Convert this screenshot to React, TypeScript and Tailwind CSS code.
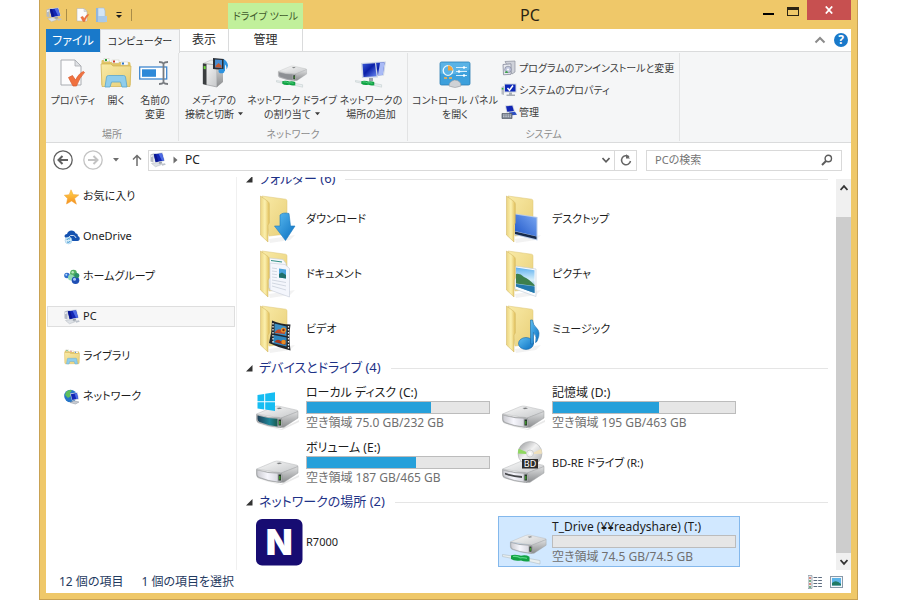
import type { ReactNode } from 'react';

interface Entry {
  name: string;
  icon: ReactNode;
  used?: number;
  free?: string;
  selected?: boolean;
}

interface Group {
  title: string;
  entries: Entry[];
}

// Shared gradients for every icon on the page
function IconDefs() {
  return (
    <svg className="absolute h-0 w-0" aria-hidden="true">
      <defs>
        <linearGradient id="folderBack" x1="0" y1="0" x2="1" y2="1">
          <stop offset="0" stopColor="#f9eaa6" />
          <stop offset="1" stopColor="#e8cf78" />
        </linearGradient>
        <linearGradient id="folderFlap" x1="0" y1="0" x2="1" y2="0">
          <stop offset="0" stopColor="#ecd47f" />
          <stop offset="0.5" stopColor="#fbf0ae" />
          <stop offset="1" stopColor="#e2c05c" />
        </linearGradient>
        <linearGradient id="arrowBlue" x1="0" y1="0" x2="1" y2="1">
          <stop offset="0" stopColor="#5dbdf2" />
          <stop offset="1" stopColor="#0a6fc0" />
        </linearGradient>
        <linearGradient id="screenBlue" x1="0" y1="0" x2="1" y2="1">
          <stop offset="0" stopColor="#3b5bd8" />
          <stop offset="0.45" stopColor="#0a1fa8" />
          <stop offset="1" stopColor="#6b8af2" />
        </linearGradient>
        <linearGradient id="deskBlue" x1="0" y1="1" x2="1" y2="0">
          <stop offset="0" stopColor="#1f57c8" />
          <stop offset="1" stopColor="#7aa7f2" />
        </linearGradient>
        <linearGradient id="steelTop" x1="0" y1="0" x2="1" y2="1">
          <stop offset="0" stopColor="#fafafa" />
          <stop offset="1" stopColor="#c6c8ca" />
        </linearGradient>
        <linearGradient id="steelSide" x1="0" y1="0" x2="0" y2="1">
          <stop offset="0" stopColor="#dedfe0" />
          <stop offset="1" stopColor="#8b8d8f" />
        </linearGradient>
        <linearGradient id="steelFront" x1="0" y1="0" x2="1" y2="0">
          <stop offset="0" stopColor="#cdcdd3" />
          <stop offset="0.5" stopColor="#f6f6fc" />
          <stop offset="1" stopColor="#dadae2" />
        </linearGradient>
        <linearGradient id="tealFront" x1="0" y1="0" x2="1" y2="0">
          <stop offset="0" stopColor="#1f4058" />
          <stop offset="0.6" stopColor="#1f8699" />
          <stop offset="1" stopColor="#1b5a4e" />
        </linearGradient>
        <linearGradient id="discSilver" x1="0" y1="0" x2="1" y2="1">
          <stop offset="0" stopColor="#8f9193" />
          <stop offset="0.45" stopColor="#f2f2f2" />
          <stop offset="1" stopColor="#a3a5a7" />
        </linearGradient>
        <linearGradient id="sky" x1="0" y1="0" x2="0" y2="1">
          <stop offset="0" stopColor="#5fb0ee" />
          <stop offset="0.5" stopColor="#d8f0fb" />
          <stop offset="1" stopColor="#2e86b8" />
        </linearGradient>
        <linearGradient id="star" x1="0" y1="0" x2="0" y2="1">
          <stop offset="0" stopColor="#ffd84f" />
          <stop offset="1" stopColor="#f58d1e" />
        </linearGradient>
      </defs>
    </svg>
  );
}

function PcIcon() {
  return (
    <svg className="h-4 w-4 shrink-0" viewBox="0 0 16 16">
      <path d="M.5 2.500L3.500 1.500v9L.5 9.500z" fill="#b4bac4" />
      <path d="M1 3.500l1.800-.5v1.600L1 5z" fill="#f3f5f8" />
      <path d="M3 1.500L12.500.6 14.800 9 5 10.800z" fill="#c3ccdc" />
      <path d="M3.800 2.200L12 1.400l2 7-8.300 1.500z" fill="#1226b4" />
      <path d="M8.500 1.800L12 1.400l2 7-2 .4z" fill="#4d6be6" />
      <path d="M3.800 2.200l2.200-.2 2.500 7.400-2.800.5z" fill="#0a1690" />
      <path d="M8.500 10.200l3-.6 1 1.900-3.200.6z" fill="#9aa1ab" />
      <path d="M1.500 11.500L7 10.500l4 2.300-5.500 2z" fill="#dde1e6" stroke="#a2a8b1" strokeWidth=".4" />
      <path d="M11 12l4-.8.700 1.500-3.500 1z" fill="#bcc2cb" />
    </svg>
  );
}

function FolderIcon({ children }: { children?: ReactNode }) {
  return (
    <svg className="h-12 w-12 shrink-0" viewBox="0 0 48 48">
      <path d="M13 44l26-4-5 5-20 3z" fill="#ececec" opacity=".7" />
      <path d="M6 1l23.500 3.200q1.500.3 1.500 1.800V39L13 41z" fill="url(#folderBack)" stroke="#dcc474" strokeWidth=".5" />
      {children}
      <path d="M4.500 1L12 6.500q1.300 1 1.300 2.500v19l-1.300 2v17L4.500 40z" fill="url(#folderFlap)" stroke="#cfb25c" strokeWidth=".5" />
    </svg>
  );
}

function DownloadFolder() {
  return (
    <FolderIcon>
      <path d="M24 20q3-3 9-1.500l1.500 12.500H39L29.500 45.500 18.500 31H24z" fill="url(#arrowBlue)" stroke="#1a78bf" strokeWidth=".6" />
    </FolderIcon>
  );
}

function DesktopFolder() {
  return (
    <FolderIcon>
      <path d="M13 18.500l22.500 3.500v23.500L13 40z" fill="#b8cbe8" />
      <path d="M13 19.500l21.500 3.300v18.400L13 36z" fill="url(#deskBlue)" />
      <path d="M13 36.500l21.500 5v2.800L13 39z" fill="#172a4b" />
    </FolderIcon>
  );
}

function DocumentFolder() {
  return (
    <FolderIcon>
      <path d="M13 8l14 1.500 3 4v28L13 38z" fill="#f7f9fd" stroke="#c5cbd8" strokeWidth=".6" />
      <path d="M15 10.500l11 1.500" stroke="#2f8f86" strokeWidth="1.200" />
      <path d="M14 13l15 1.500 4.500 4V47L14 40z" fill="#f4f6fc" stroke="#c5cbd8" strokeWidth=".6" />
      <path d="M23 18.500l7 1v9l-7-1z" fill="#4aa3dc" />
      <path d="M23 24l3-1.500 4 2.500v3.500l-7-1z" fill="#1f6f6a" />
      <path d="M16 18l5 .7M16 21l5 .7M16 24l5 .7M16 27l5 .7M16 30l14 2.500M16 33l14 3M16 36l14 4" stroke="#c9cfdb" strokeWidth=".8" />
    </FolderIcon>
  );
}

function PictureFolder() {
  return (
    <FolderIcon>
      <path d="M13 16l21 3v27.500L13 39z" fill="#fafcfe" stroke="#bfcbd6" strokeWidth=".6" />
      <path d="M14 17.500l18.500 2.800V43L14 36.500z" fill="url(#sky)" />
      <path d="M14 24q4-1 8 3 5 2 10.500 8v1L14 33.500z" fill="#3d7f4c" />
      <path d="M14 34l18.500 2.500V43L14 36.500z" fill="#2379ae" />
    </FolderIcon>
  );
}

function VideoFolder() {
  return (
    <FolderIcon>
      <path d="M16 15.500q9 4 18.500 4-2 12 0 26Q23 43 13 38q3-11 3-22.500z" fill="#23262b" />
      <path d="M18.500 18.500l12 3v9.500l-12-2.500z" fill="#3c8fc4" />
      <path d="M18 30l12.500 2.500v9L16.500 38z" fill="#2f86bd" />
      <path d="M19 27q3-4 6-2l4-1v5l-10-1z" fill="#c04a2a" />
      <circle cx="27.500" cy="25" r="2.600" fill="#e8922a" />
      <circle cx="27.500" cy="25" r="1.200" fill="#7b2a18" />
      <path d="M18.500 37q3-4 6-1l5-1v5z" fill="#a5381f" />
      <circle cx="27.500" cy="37" r="2.200" fill="#e98d22" />
      <path d="M17 18v20M32.500 21v23" stroke="#f3f3f3" strokeWidth="1.300" strokeDasharray="1.500 1.500" />
    </FolderIcon>
  );
}

function MusicFolder() {
  return (
    <FolderIcon>
      <ellipse cx="24" cy="38.500" rx="7.500" ry="6" fill="url(#arrowBlue)" stroke="#1467a8" strokeWidth=".6" />
      <path d="M28.500 15h2q.5 5 4 8 4.500 4 1 12-.5 2-2 2.500 2-6-2-10V39h-3z" fill="url(#arrowBlue)" stroke="#1467a8" strokeWidth=".6" />
    </FolderIcon>
  );
}

function DriveBody({ front = 'url(#steelFront)' }: { front?: string }) {
  return (
    <g>
      <path d="M.5 30L18 22.700q2.500-1 5-.5l18 4q1.800.6.5 1.600L26 34z" fill="url(#steelTop)" stroke="#b5b7b9" strokeWidth=".5" />
      <path d="M25 34l17-6.500V34L28 43.300l-4 .2z" fill="url(#steelSide)" stroke="#9b9d9f" strokeWidth=".5" />
      <path d="M.5 30.500q11 3.500 23 3.300 2.500 0 2.500 2.500V41q0 2.500-3 2.500Q12 42.500 2.500 38.800.5 38 .5 35.500z" fill="#b2b4b7" stroke="#8a8c8f" strokeWidth=".5" />
      <path d="M1.500 31.500q9.500 3 20 3.200v7.800Q12 41.500 3.500 38 1.500 37 1.500 35z" fill={front} />
      <path d="M22.500 35.500h2.500v6h-2.500z" fill="#26352a" />
      <path d="M23.300 37h1v3.500h-1z" fill="#49b82c" />
      <path d="M20.500 24l3.500-.5 2 1-3.500.8z" fill="#7e8082" />
    </g>
  );
}

function DriveIcon() {
  return (
    <svg className="h-12 w-12 shrink-0" viewBox="0 0 48 48">
      <path d="M1 40l24 5 18-9v2L26 46z" fill="#e0e0e0" opacity=".7" />
      <DriveBody />
    </svg>
  );
}

function SystemDriveIcon() {
  return (
    <svg className="h-12 w-12 shrink-0" viewBox="0 0 48 48">
      <path d="M1 40l24 5 18-9v2L26 46z" fill="#e0e0e0" opacity=".7" />
      <DriveBody front="url(#tealFront)" />
      <path d="M1.500 11l6.700-1v7.200H1.500zM9.200 9.800L19 8.300v8.900H9.200zM1.500 18.200h6.700v7.200l-6.700-1zM9.200 18.200H19V27l-9.800-1.500z" fill="#16bdf2" />
    </svg>
  );
}

function BluRayIcon() {
  return (
    <svg className="h-12 w-12 shrink-0" viewBox="0 0 48 48">
      <DriveBody />
      <path d="M3 33.800q8 3 17 3.300v1.800Q10 38.300 3 35.600z" fill="#45474a" />
      <circle cx="28" cy="14.500" r="12" fill="url(#discSilver)" stroke="#a3a5a7" strokeWidth=".5" />
      <path d="M24.500 13l-7.800-3.300q-.9 2.300-.7 4.800l8.500.5z" fill="#8fd860" />
      <path d="M31.500 13.500l7.700-3.500q.9 2.300.7 4.800l-8.400.2z" fill="#efe0bb" />
      <circle cx="28" cy="14.500" r="3.500" fill="#efefef" stroke="#b5b7b9" strokeWidth=".6" />
      <circle cx="28" cy="14.500" r="1.200" fill="#ffffff" />
      <rect x="20" y="20" width="16" height="9.500" fill="#2b2b2b" />
      <text x="28" y="28" textAnchor="middle" fill="#ffffff" fontSize="9" fontFamily="Noto Sans, sans-serif">BD</text>
    </svg>
  );
}

function NetworkPlug() {
  return (
    <g>
      <path d="M.5 36.500l10 1.500v2.500L.5 38.500z" fill="#e9eff0" stroke="#a9b4b8" strokeWidth=".5" />
      <path d="M27 40.500l11 2v3.500l-11-2.500z" fill="#e9eff0" stroke="#a9b4b8" strokeWidth=".5" />
      <path d="M9 37.500q3-1.500 8-.3l2 .5q5-1 8.500 1v4.500q-4.500 1-8.500-.7Q12 43.500 9 41z" fill="#11a244" />
      <path d="M11 38.500q4-.5 7 1.300 4-.5 7 .6" fill="none" stroke="#57d786" strokeWidth="1.200" />
    </g>
  );
}

function NetworkDriveIcon() {
  return (
    <svg className="h-12 w-12 shrink-0" viewBox="0 0 48 48">
      <g transform="translate(8 -2) scale(.86)">
        <DriveBody />
      </g>
      <NetworkPlug />
    </svg>
  );
}

function RouterIcon() {
  return (
    <svg className="h-12 w-12 shrink-0" viewBox="0 0 48 48">
      <rect x="0" y="1" width="46.500" height="46.500" rx="6" fill="#170c72" />
      <text x="23.200" y="37" textAnchor="middle" fill="#ffffff" fontSize="35" fontWeight="900" fontFamily="Inter, sans-serif">N</text>
    </svg>
  );
}

function StarIcon() {
  return (
    <svg className="h-4 w-4 shrink-0" viewBox="0 0 16 16">
      <path d="M7 .8l2.200 4.800 5.600.3-4.200 3.700 1.800 5.600L7.600 12 2.500 15l1-5.400L.3 6.200l4.900-.5z" fill="url(#star)" stroke="#f0a030" strokeWidth=".5" />
    </svg>
  );
}

function OneDriveIcon() {
  return (
    <svg className="h-4 w-4 shrink-0" viewBox="0 0 16 16">
      <path d="M.5 7.500Q.5 5 3 5q1-3.500 4.500-3.500 3 0 4 2.800Q14 4.500 14 7q2 1 1.800 3-.3 2-2.300 2H5z" fill="#1552b0" />
      <path d="M4.500 8.500Q6 5.500 9.500 6.500q2 .5 2.500 2.500" fill="none" stroke="#ffffff" strokeWidth=".8" />
      <circle cx="4.500" cy="11.500" r="3.400" fill="#d7edf9" stroke="#8cc2e2" strokeWidth=".5" />
      <path d="M2.800 11a2 2 0 0 1 3.200-.8M6.200 12a2 2 0 0 1-3.200.8" fill="none" stroke="#2f8fd0" strokeWidth="1" />
    </svg>
  );
}

function HomegroupIcon() {
  return (
    <svg className="h-4 w-4 shrink-0" viewBox="0 0 16 16">
      <circle cx="3" cy="6.500" r="2.800" fill="#2e6fce" />
      <circle cx="9.500" cy="4.200" r="3.400" fill="#55b065" />
      <circle cx="7" cy="8.500" r="3" fill="#8fd9b0" />
      <circle cx="11.500" cy="11.300" r="3.800" fill="#1f4fb4" />
      <circle cx="12.800" cy="6.500" r="2.500" fill="#2b8f68" />
      <circle cx="2.300" cy="5.800" r="1" fill="#b9d7ff" />
      <circle cx="8.700" cy="3.200" r="1.200" fill="#b7e8c0" />
      <circle cx="10.500" cy="10.300" r="1.500" fill="#a9c6fb" />
    </svg>
  );
}

function OpenFolderArt() {
  return (
    <g>
      <path d="M2 3h7l1 2h19q1.500 0 1.500 2v21H1.500V4z" fill="#e2c565" />
      <rect x="4" y="1.500" width="5" height="3" fill="#ffffff" stroke="#ccc9ba" strokeWidth=".5" />
      <rect x="5" y="2" width="2" height="2" fill="#2c9b3b" />
      <rect x="12" y="3" width="7" height="3" fill="#ffffff" stroke="#ccc9ba" strokeWidth=".5" />
      <rect x="13" y="3.500" width="2" height="2" fill="#cf3b2b" />
      <rect x="21" y="5" width="7" height="3" fill="#ffffff" stroke="#ccc9ba" strokeWidth=".5" />
      <rect x="22" y="5.500" width="2" height="2" fill="#2d75c9" />
      <path d="M1 7h10l2 2h18l-1 20.500H2z" fill="url(#folderBack)" stroke="#d0b254" strokeWidth=".7" />
      <path d="M5 30l1.500-10q.3-1.500 2-1.500h15q1.700 0 2 1.500L27 30h-5l-1.500-5h-9L10 30z" fill="#8fcdec" stroke="#5ba6cd" strokeWidth=".8" />
    </g>
  );
}

function LibraryIcon() {
  return (
    <svg className="h-4 w-4 shrink-0" viewBox="0 0 32 32">
      <OpenFolderArt />
    </svg>
  );
}

function NetworkIcon() {
  return (
    <svg className="h-4 w-4 shrink-0" viewBox="0 0 16 16">
      <circle cx="6.500" cy="7" r="6.300" fill="#2675c8" />
      <path d="M2 3q3-3 6-1.500L6 4l1 3-3 2Q2 7 1 6z" fill="#5fbf5c" />
      <path d="M6 4.500l7.500-1.300 1.500 7-7 1.500z" fill="#c9d2e0" />
      <path d="M6.800 5.200l6-1.100 1.300 5.500-5.800 1.300z" fill="#1226b4" />
      <path d="M10.500 4.500l2.300-.4 1.300 5.500-1.800.4z" fill="#4d6be6" />
      <path d="M6 13.500l4-1.700 5 1.200-3.500 2z" fill="#c6cbd2" stroke="#8f959e" strokeWidth=".5" />
    </svg>
  );
}

function CheckDocArt() {
  return (
    <g>
      <path d="M4 3h14l6 6v19H4z" fill="#fcfcfd" stroke="#a9acb1" strokeWidth="1" />
      <path d="M18 3v6h6z" fill="#dfe1e5" stroke="#a9acb1" strokeWidth=".8" />
      <path d="M11.500 20.500l4-2 3 4.500q4-7.500 8-8.500l1 1q-5 5-8 13.500h-3.500z" fill="#f0713f" stroke="#d9592c" strokeWidth=".7" />
    </g>
  );
}

function RenameArt() {
  return (
    <g>
      <rect x=".7" y="10" width="27" height="12" fill="#ffffff" stroke="#3f87cf" strokeWidth="1.300" />
      <rect x="3" y="12.300" width="14" height="7.500" fill="#2e89d8" />
      <path d="M20 5q3.500 0 4.500 1.500Q25.500 5 29 5M20 27q3.500 0 4.500-1.500 1 1.500 4.500 1.500M24.500 6v20" fill="none" stroke="#777b80" strokeWidth="1.800" />
    </g>
  );
}

function MediaArt() {
  return (
    <g>
      <path d="M5 6.500L13 3l12 2-6 3z" fill="#eceded" stroke="#b0b2b4" strokeWidth=".5" />
      <path d="M5 6.500L19 8v22L5 27z" fill="url(#steelTop)" stroke="#8f9193" strokeWidth=".6" />
      <path d="M19 8l6-3v20l-6 5z" fill="url(#steelSide)" />
      <path d="M5 6.500l3.500.5v21L5 27z" fill="#3b3e40" />
      <path d="M5.700 9l2 .2v3l-2-.2z" fill="#6ede3e" />
      <path d="M15 1l11 1v11l-11-1z" fill="#2a2e36" />
      <path d="M17 2.500l7 .5v8l-7-.5z" fill="#4a8ed1" />
      <path d="M17.500 9l3-3 3 2.500v2.200l-6-.4z" fill="#c65a32" />
      <ellipse cx="23.500" cy="14" rx="3" ry="2.300" fill="#2d93e0" />
      <path d="M25.500 14V2q4 2 4.500 6.500-.5 2.500-1.500 4 0-4-1.500-5V14z" fill="#2d93e0" />
    </g>
  );
}

function MapDriveArt() {
  return (
    <g>
      <g transform="translate(2 -6) scale(.68)">
        <DriveBody front="#8d9094" />
      </g>
      <g transform="translate(0 -2) scale(.7)">
        <NetworkPlug />
      </g>
    </g>
  );
}

function AddPlaceArt() {
  return (
    <g>
      <path d="M17 5l14-.5-2 14-11 1z" fill="#cdd6e6" />
      <path d="M18 6l11.500-.5-1.800 12.500-9 .5z" fill="url(#screenBlue)" />
      <path d="M25 5.700l4.500-.2-1.800 12.500-4.700.3z" fill="#a9baf6" />
      <path d="M6 6l15-1 2 15.500-16 .5z" fill="#cdd6e6" />
      <path d="M7.500 7L20 6.200l1.500 13L8.500 20z" fill="url(#screenBlue)" />
      <path d="M14 21h4v3h-4z" fill="#9aa2ad" />
      <g transform="translate(0 -2) scale(.7)">
        <NetworkPlug />
      </g>
    </g>
  );
}

function ControlPanelArt() {
  return (
    <g>
      <rect x="1" y="5" width="30" height="23" rx="1.500" fill="#3da0dc" stroke="#2c7db3" strokeWidth=".8" />
      <path d="M1.500 5.500h29v7q-14 7-29 4z" fill="#6fc0ec" opacity=".6" />
      <circle cx="9" cy="13.500" r="4.800" fill="none" stroke="#e8f6ff" strokeWidth="1.300" />
      <path d="M9 13.500v-5a5 5 0 0 1 5 5z" fill="#f2a33a" />
      <path d="M17 10.500h11M17 14.500h11M17 18.500h11" stroke="#d5edfb" strokeWidth="1" />
      <circle cx="25" cy="10.500" r="1.200" fill="#ffffff" />
      <circle cx="20" cy="14.500" r="1.200" fill="#ffffff" />
      <circle cx="25" cy="18.500" r="1.200" fill="#ffffff" />
      <path d="M5 21h3M10 21h3" stroke="#ffb347" strokeWidth="1.300" />
      <path d="M10 29q0-4.500 5.500-6Q22 23.500 22 29q-6 3-12 0z" fill="#cfd2d6" stroke="#989da3" strokeWidth=".6" />
    </g>
  );
}

function ProgramsIcon() {
  return (
    <svg className="h-4 w-4 shrink-0" viewBox="0 0 16 16">
      <path d="M4 1.500L14 1v11l-3 2z" fill="#cfd2da" stroke="#8c909c" strokeWidth=".7" />
      <path d="M2 4.500l8-.7v10.500l-7.500.5z" fill="#e9ebf0" stroke="#84889a" strokeWidth=".8" />
      <circle cx="7" cy="9.500" r="3.300" fill="#c2c8de" stroke="#777c90" strokeWidth=".6" />
      <circle cx="7" cy="9.500" r="1" fill="#ffffff" />
      <path d="M3.500 13l2.500-2.500 1 2.500z" fill="#3ea24a" />
    </svg>
  );
}

function SystemIcon() {
  return (
    <svg className="h-4 w-4 shrink-0" viewBox="0 0 16 16">
      <path d="M.5 5L3 4v9l-2.500-.7z" fill="#b7bcc4" />
      <rect x=".8" y="6" width="1.500" height="1.500" fill="#2eb83c" />
      <rect x="3" y="1.500" width="12.500" height="9" fill="#cfd5df" />
      <rect x="4" y="2.500" width="10.500" height="7" fill="#0d28b8" />
      <path d="M6.500 6l2 2.200L12 3.500" fill="none" stroke="#ffffff" strokeWidth="1.500" />
      <path d="M8 10.500h3v2H8zM5.500 12.500H14v1.500H5.500z" fill="#a7adb7" />
    </svg>
  );
}

function ManageIcon() {
  return (
    <svg className="h-4 w-4 shrink-0" viewBox="0 0 16 16">
      <path d="M4 1.500l8-.8 2 7-8.500 1z" fill="#cfd5df" />
      <path d="M5 2.300l6.300-.6 1.600 5.300-6.600.8z" fill="#1226b4" />
      <path d="M8 8.500l6-.8 2 3-7 .8z" fill="#2c4fc4" />
      <path d="M1 9.500h10v5H1z" fill="#7c8593" stroke="#525a66" strokeWidth=".7" />
      <path d="M2 11h8M2 12.700h8" stroke="#d9dde3" strokeWidth=".8" strokeDasharray="1.500 .8" />
    </svg>
  );
}

function Caret({ className }: { className: string }) {
  return (
    <svg className={className} viewBox="0 0 6 4">
      <path d="M0 0h6L3 3.500z" fill="currentColor" />
    </svg>
  );
}

function TitleBar() {
  return (
    <header className="flex h-[29px] shrink-0">
      <div className="flex w-[182px] shrink-0 items-center text-[#2b2b2b]">
        <PcIcon />
        <span className="ml-1 h-3 w-px bg-[#a98c48]" />
        <button type="button" aria-label="プロパティ" className="ml-2">
          <svg className="h-4 w-4" viewBox="0 0 32 32"><CheckDocArt /></svg>
        </button>
        <button type="button" aria-label="新しいフォルダー" className="ml-1">
          <svg className="h-4 w-4" viewBox="0 0 16 16">
            <path d="M1 1h6v14H1z" fill="#8fb6de" />
            <path d="M3 1h6l1 3v11H3z" fill="#d3e5f5" stroke="#9dbadb" strokeWidth=".6" />
            <path d="M3 9h9v6H3z" fill="#a9c9e8" />
          </svg>
        </button>
        <button type="button" aria-label="クイック アクセス" className="ml-1 flex h-4 w-3 items-center">
          <svg className="h-2 w-2" viewBox="0 0 8 8">
            <path d="M1.500 1h5v1h-5zM1 4h6L4 7z" fill="#1c1c1c" />
          </svg>
        </button>
        <span className="ml-1 h-3 w-px bg-[#a98c48]" />
      </div>
      <div className="mt-[3px] w-[75px] shrink-0 bg-[#c1f09b] text-center text-[10px] leading-[26px] whitespace-nowrap text-[#3f5a2c]">
        ドライブ ツール
      </div>
      <h1 className="flex-1 text-center text-base leading-[30px] text-[#2b2413]">PC</h1>
      <div className="flex h-5 shrink-0">
        <button type="button" aria-label="最小化" className="flex w-[22px] items-end justify-center pb-[5px]">
          <span className="h-[2px] w-[11px] bg-black" />
        </button>
        <button type="button" aria-label="最大化" className="flex w-7 items-center justify-center pt-[3px]">
          <span className="h-[9px] w-3 border border-t-[3px] border-[#2b2413]" />
        </button>
        <button type="button" aria-label="閉じる" className="flex w-11 items-center justify-center bg-[#c75050]">
          <svg className="h-2 w-2" viewBox="0 0 8 8">
            <path d="M.8.5l6.400 7M7.200.5l-6.400 7" stroke="#ffffff" strokeWidth="1.800" />
          </svg>
        </button>
      </div>
    </header>
  );
}

function Tabs() {
  return (
    <div className="flex h-[23px] shrink-0 text-xs whitespace-nowrap text-[#2b2b2b]">
      <button type="button" className="w-[54px] bg-[#1979ca] text-white">ファイル</button>
      <button type="button" className="relative z-10 -mb-px w-20 border-x border-t border-[#dadbdc] bg-[#f5f6f7] text-[10px]">コンピューター</button>
      <button type="button" className="w-12 border-b border-[#dadbdc]">表示</button>
      <button type="button" className="w-[75px] border-x border-b border-[#dadbdc]">管理</button>
      <div className="flex flex-1 items-center justify-end gap-2 border-b border-[#dadbdc] pr-[3px]">
        <button type="button" aria-label="リボンの最小化">
          <svg className="h-3 w-3" viewBox="0 0 12 12">
            <path d="M1.500 8.500L6 4l4.500 4.500" fill="none" stroke="#8b8b8b" strokeWidth="2" />
          </svg>
        </button>
        <button type="button" aria-label="ヘルプ" className="h-[14px] w-[14px] rounded-full bg-[#1979ca] text-xs leading-[14px] font-bold text-white">?</button>
      </div>
    </div>
  );
}

function RibbonGroup({ label, children }: { label: string; children: ReactNode }) {
  return (
    <section className="flex flex-col border-r border-[#e2e3e4] px-px">
      <div className="flex h-[74px]">{children}</div>
      <div className="text-center text-[10px] leading-[14px] text-[#8c8c8c]">{label}</div>
    </section>
  );
}

interface RibbonButtonProps {
  art: ReactNode;
  width: string;
  lines: string[];
  menu?: boolean;
}

function RibbonButton({ art, width, lines, menu }: RibbonButtonProps) {
  return (
    <button type="button" className={`flex flex-col items-center pt-1 text-[10px] leading-[14px] whitespace-nowrap ${width}`}>
      <svg className="mb-1 h-8 w-8 shrink-0" viewBox="0 0 32 32">
        {art}
      </svg>
      <span>{lines[0]}</span>
      {lines[1] && (
        <span className="flex items-center gap-1">
          {lines[1]}
          {menu && <Caret className="h-1 w-[5px]" />}
        </span>
      )}
    </button>
  );
}

function Ribbon() {
  const links = [
    { label: 'プログラムのアンインストールと変更', icon: <ProgramsIcon /> },
    { label: 'システムのプロパティ', icon: <SystemIcon /> },
    { label: '管理', icon: <ManageIcon /> },
  ];

  return (
    <div className="flex h-[91px] shrink-0 border-b border-[#dadbdc] bg-[#f5f6f7] py-px text-[#3c3c3c]">
      <RibbonGroup label="場所">
        <RibbonButton art={<CheckDocArt />} width="w-[52px]" lines={['プロパティ']} />
        <RibbonButton art={<OpenFolderArt />} width="w-[34px]" lines={['開く']} />
        <RibbonButton art={<RenameArt />} width="w-[44px]" lines={['名前の', '変更']} />
      </RibbonGroup>
      <RibbonGroup label="ネットワーク">
        <RibbonButton art={<MediaArt />} width="w-[68px]" lines={['メディアの', '接続と切断']} menu />
        <RibbonButton art={<MapDriveArt />} width="w-[88px]" lines={['ネットワーク ドライブ', 'の割り当て']} menu />
        <RibbonButton art={<AddPlaceArt />} width="w-[70px]" lines={['ネットワークの', '場所の追加']} />
      </RibbonGroup>
      <RibbonGroup label="システム">
        <RibbonButton art={<ControlPanelArt />} width="w-[92px]" lines={['コントロール パネル', 'を開く']} />
        <ul className="flex w-[177px] flex-col gap-[6px] pt-[7px]">
          {links.map((link) => (
            <li key={link.label}>
              <button type="button" className="flex h-4 items-center gap-[2px] text-[10px] whitespace-nowrap">
                {link.icon}
                {link.label}
              </button>
            </li>
          ))}
        </ul>
      </RibbonGroup>
    </div>
  );
}

function AddressRow() {
  return (
    <div className="flex h-[34px] shrink-0 items-center pr-[9px] pl-[7px] text-xs">
      <button type="button" aria-label="戻る">
        <svg className="h-5 w-5" viewBox="0 0 20 20" fill="none" stroke="#5f5f5f">
          <circle cx="10" cy="10" r="9.200" strokeWidth="1.300" />
          <path d="M15 10H6M9.500 6L5.500 10l4 4" strokeWidth="2" />
        </svg>
      </button>
      <button type="button" aria-label="進む" className="ml-[10px]">
        <svg className="h-5 w-5" viewBox="0 0 20 20" fill="none" stroke="#c3c3c3">
          <circle cx="10" cy="10" r="9.200" strokeWidth="1.300" />
          <path d="M5 10h9M10.500 6l4 4-4 4" strokeWidth="2" />
        </svg>
      </button>
      <button type="button" aria-label="最近表示した場所" className="ml-[10px] text-[#6d6d6d]">
        <Caret className="h-1 w-[6px]" />
      </button>
      <button type="button" aria-label="上へ" className="ml-3">
        <svg className="h-3 w-3" viewBox="0 0 12 12" fill="none" stroke="#6d6d6d" strokeWidth="1.500">
          <path d="M6 12V1.500M2 5.500l4-4 4 4" />
        </svg>
      </button>
      <div className="ml-[5px] flex h-[21px] flex-1 items-center border border-[#d9d9d9] pl-px">
        <PcIcon />
        <svg className="ml-[6px] h-2 w-2" viewBox="0 0 8 8">
          <path d="M1.500 .5v7L5.500 4z" fill="#6d6d6d" />
        </svg>
        <button type="button" className="ml-1 flex-1 pl-px text-left text-[#222222]">PC</button>
        <button type="button" aria-label="以前の場所" className="px-1">
          <svg className="h-2 w-2" viewBox="0 0 8 8">
            <path d="M.5 2L4 5.800 7.500 2" fill="none" stroke="#5c5c5c" strokeWidth="1.600" />
          </svg>
        </button>
        <button type="button" aria-label="最新の情報に更新" className="flex h-full w-[22px] items-center justify-center border-l border-[#d9d9d9]">
          <svg className="h-3 w-3" viewBox="0 0 12 12">
            <path d="M9 2.800A4.500 4.500 0 1 0 10.500 7" fill="none" stroke="#666666" strokeWidth="1.500" />
            <path d="M6 0v4.500h4z" fill="#666666" />
          </svg>
        </button>
      </div>
      <label className="ml-[9px] flex h-[21px] w-[196px] items-center border border-[#d9d9d9] px-2">
        <input type="search" aria-label="PCの検索" placeholder="PCの検索" className="w-full min-w-0 flex-1 text-[11px] placeholder:text-[#757575]" />
        <svg className="h-3 w-3 shrink-0" viewBox="0 0 12 12" fill="none" stroke="#5c5c5c">
          <circle cx="7.300" cy="4.500" r="3.200" strokeWidth="1.400" />
          <path d="M5 7L1 11" strokeWidth="2" />
        </svg>
      </label>
    </div>
  );
}

function Sidebar() {
  const places = [
    { label: 'お気に入り', icon: <StarIcon /> },
    { label: 'OneDrive', icon: <OneDriveIcon /> },
    { label: 'ホームグループ', icon: <HomegroupIcon /> },
    { label: 'PC', icon: <PcIcon />, selected: true },
    { label: 'ライブラリ', icon: <LibraryIcon /> },
    { label: 'ネットワーク', icon: <NetworkIcon /> },
  ];

  return (
    <nav className="w-[191px] shrink-0 border-r border-[#f0f0f0] pt-[9px] pr-px pl-px">
      <ul className="flex flex-col gap-[19px]">
        {places.map((place) => (
          <li key={place.label}>
            <a
              href="#"
              className={`flex h-[21px] items-center gap-[3px] border pl-4 text-[11px] text-[#1c1c1c] ${
                place.selected ? 'border-[#dedede] bg-[#f7f7f7]' : 'border-transparent'
              }`}
            >
              {place.icon}
              {place.label}
            </a>
          </li>
        ))}
      </ul>
    </nav>
  );
}

function EntryTile({ entry }: { entry: Entry }) {
  return (
    <li className="flex h-[55px] items-center">
      <a
        href="#"
        className={`flex h-[51px] w-full items-center gap-[2px] border px-[3px] ${
          entry.selected ? 'border-[#84b8ec] bg-[#d1e8ff]' : 'border-transparent'
        }`}
      >
        {entry.icon}
        <div className="min-w-0 flex-1 leading-[15px] whitespace-nowrap text-[#1c1c1c]">
          {entry.free ? (
            <div className="text-xs leading-[15px]">
              <div>{entry.name}</div>
              <div className="my-px h-[13px] border border-[#bcbcbc] bg-[#e6e6e6]">
                <div className="h-full bg-[#26a0da]" style={{ width: `${entry.used ?? 0}%` }} />
              </div>
              <div className="text-[#707070]">空き領域 {entry.free}</div>
            </div>
          ) : (
            <div className="text-[11px]">{entry.name}</div>
          )}
        </div>
      </a>
    </li>
  );
}

const groups: Group[] = [
  {
    title: 'フォルダー (6)',
    entries: [
      { name: 'ダウンロード', icon: <DownloadFolder /> },
      { name: 'デスクトップ', icon: <DesktopFolder /> },
      { name: 'ドキュメント', icon: <DocumentFolder /> },
      { name: 'ピクチャ', icon: <PictureFolder /> },
      { name: 'ビデオ', icon: <VideoFolder /> },
      { name: 'ミュージック', icon: <MusicFolder /> },
    ],
  },
  {
    title: 'デバイスとドライブ (4)',
    entries: [
      { name: 'ローカル ディスク (C:)', icon: <SystemDriveIcon />, used: 68, free: '75.0 GB/232 GB' },
      { name: '記憶域 (D:)', icon: <DriveIcon />, used: 58, free: '195 GB/463 GB' },
      { name: 'ボリューム (E:)', icon: <DriveIcon />, used: 60, free: '187 GB/465 GB' },
      { name: 'BD-RE ドライブ (R:)', icon: <BluRayIcon /> },
    ],
  },
  {
    title: 'ネットワークの場所 (2)',
    entries: [
      { name: 'R7000', icon: <RouterIcon /> },
      { name: 'T_Drive (¥¥readyshare) (T:)', icon: <NetworkDriveIcon />, used: 0, free: '74.5 GB/74.5 GB', selected: true },
    ],
  },
];

function FileList() {
  return (
    <main className="min-w-0 flex-1 overflow-hidden pr-2 pl-[9px]">
      {/* list is scrolled down by half a heading */}
      <div className="-mt-[10px]">
        {groups.map((group) => (
          <section key={group.title}>
            <h2 className="flex h-6 items-center gap-[6px] text-[13px] whitespace-nowrap text-[#1e3287]">
              <svg className="h-[7px] w-[7px]" viewBox="0 0 7 7">
                <path d="M6.500 0v6.500H0z" fill="#333333" />
              </svg>
              {group.title}
              <span className="ml-1 h-px flex-1 bg-[#e5e5e5]" />
            </h2>
            <ul className="grid grid-cols-[repeat(auto-fill,242px)] gap-x-1 pl-[6px]">
              {group.entries.map((entry) => (
                <EntryTile key={entry.name} entry={entry} />
              ))}
            </ul>
          </section>
        ))}
      </div>
    </main>
  );
}

function ScrollBar() {
  return (
    <div className="mt-[2px] flex w-[15px] shrink-0 flex-col bg-[#f0f0f0]">
      <button type="button" aria-label="上にスクロール" className="flex h-[17px] items-center justify-center">
        <svg className="h-2 w-2" viewBox="0 0 8 8">
          <path d="M.5 6L4 2.200 7.500 6" fill="none" stroke="#333333" strokeWidth="1.800" />
        </svg>
      </button>
      <div className="mt-[21px] flex-1 bg-[#cdcdcd]" />
      <button type="button" aria-label="下にスクロール" className="flex h-[17px] items-center justify-center">
        <svg className="h-2 w-2" viewBox="0 0 8 8">
          <path d="M.5 2L4 5.800 7.500 2" fill="none" stroke="#333333" strokeWidth="1.800" />
        </svg>
      </button>
    </div>
  );
}

function StatusBar() {
  return (
    <footer className="flex h-[23px] shrink-0 items-center gap-[18px] pr-2 pl-[13px] text-xs text-[#1f3a5f]">
      <span>12 個の項目</span>
      <span className="flex-1">1 個の項目を選択</span>
      <div className="flex gap-2">
        <button type="button" aria-label="詳細">
          <svg className="h-[14px] w-[14px]" viewBox="0 0 14 14">
            <path d="M0 .5h4v13H0z" fill="#e8ecef" stroke="#8e9aa6" strokeWidth=".8" />
            <path d="M1 3h2M1 9h2" stroke="#cf6a5a" strokeWidth="1.300" />
            <path d="M1 6h2M1 12h2" stroke="#4f9a64" strokeWidth="1.300" />
            <path d="M5.500 2.500H14M5.500 5.500H14M5.500 8.500H14M5.500 11.500H14" stroke="#5d6c80" strokeWidth="1.200" strokeDasharray="3.700 1" />
          </svg>
        </button>
        <button type="button" aria-label="大アイコン">
          <svg className="h-3 w-[13px]" viewBox="0 0 13 12">
            <rect x=".5" y=".5" width="12" height="11" fill="#f4f7fa" stroke="#8899a9" />
            <rect x="2" y="2" width="9" height="7.500" fill="#5cb4e8" />
            <path d="M2 7q4-4 9 1v1.500H2z" fill="#1f7a63" />
          </svg>
        </button>
      </div>
    </footer>
  );
}

export default function App() {
  return (
    <div lang="ja" className="flex h-screen bg-white pr-[42px] pl-[39px] font-['Noto_Sans','Noto_Sans_CJK_JP',sans-serif] [font-feature-settings:'palt']">
      <IconDefs />
      <div className="flex min-w-0 flex-1 flex-col border border-t-0 border-[#c9a254] bg-[#efc869] px-[6px] pb-[6px]">
        <TitleBar />
        <div className="flex min-h-0 flex-1 flex-col bg-white">
          <Tabs />
          <Ribbon />
          <AddressRow />
          <div className="flex min-h-0 flex-1">
            <Sidebar />
            <FileList />
            <ScrollBar />
          </div>
          <StatusBar />
        </div>
      </div>
    </div>
  );
}
